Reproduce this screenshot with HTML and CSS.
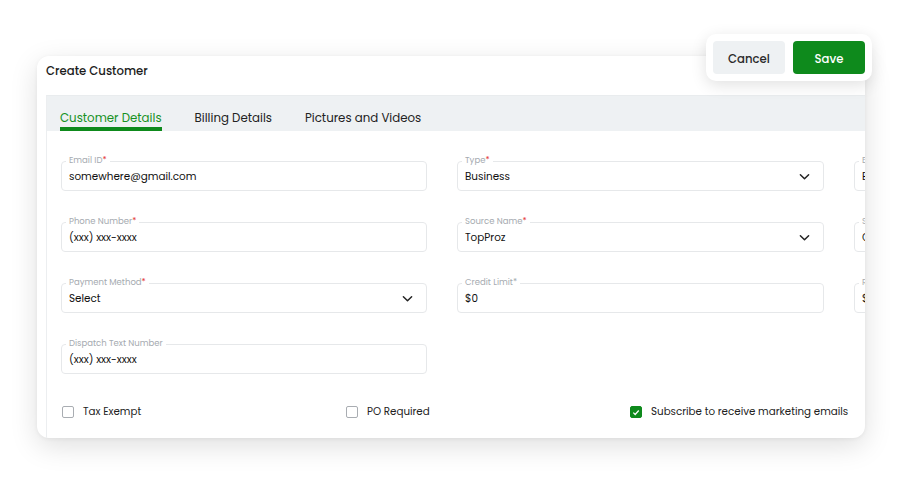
FILE: index.html
```html
<!DOCTYPE html>
<html>
<head>
<meta charset="utf-8">
<link rel="stylesheet" href="styles.css">
</head>
<body>
<div class="stage">
  <div class="card">
    <div class="card-title">Create Customer</div>
    <div class="panel">
      <div class="tabs">
        <div class="tab active">Customer Details</div>
        <div class="tab">Billing Details</div>
        <div class="tab">Pictures and Videos</div>
      </div>
      <div class="form">
        <div class="grid">
          <div class="field"><span class="label">Email ID<i>*</i></span><span class="value">somewhere@gmail.com</span></div>
          <div class="field"><span class="label">Type<i>*</i></span><span class="value">Business</span><svg class="chev" viewBox="0 0 12 8"><path d="M1.5 1.5 L6 6 L10.5 1.5"/></svg></div>
          <div class="field"><span class="label">Email<i>*</i></span><span class="value">B</span></div>

          <div class="field"><span class="label">Phone Number<i>*</i></span><span class="value">(xxx) xxx-xxxx</span></div>
          <div class="field"><span class="label">Source Name<i>*</i></span><span class="value">TopProz</span><svg class="chev" viewBox="0 0 12 8"><path d="M1.5 1.5 L6 6 L10.5 1.5"/></svg></div>
          <div class="field"><span class="label">Source<i>*</i></span><span class="value">C</span></div>

          <div class="field"><span class="label">Payment Method<i>*</i></span><span class="value">Select</span><svg class="chev" viewBox="0 0 12 8"><path d="M1.5 1.5 L6 6 L10.5 1.5"/></svg></div>
          <div class="field"><span class="label">Credit Limit<i class="grey">*</i></span><span class="value">$0</span></div>
          <div class="field"><span class="label">Rate<i>*</i></span><span class="value">$</span></div>

          <div class="field"><span class="label">Dispatch Text Number</span><span class="value">(xxx) xxx-xxxx</span></div>
        </div>
        <div class="checks">
          <label class="check"><span class="box"></span>Tax Exempt</label>
          <label class="check"><span class="box"></span>PO Required</label>
          <label class="check"><span class="box on"><svg viewBox="0 0 12 12"><path d="M2.8 6.2 L5 8.4 L9.3 3.6"/></svg></span>Subscribe to receive marketing emails</label>
        </div>
      </div>
    </div>
  </div>
  <div class="actions">
    <button class="btn cancel">Cancel</button>
    <button class="btn save">Save</button>
  </div>
</div>
</body>
</html>
```

FILE: styles.css
```css
* { box-sizing: border-box; }
html, body { margin: 0; padding: 0; background: #fff; }
body { font-family: "Poppins", "Open Sans", "Noto Sans", sans-serif; color: #1f2328; }

.stage {
  position: relative;
  width: 909px;
  height: 479px;
  overflow: hidden;
  padding: 56px 0 0 37px;
}

.card {
  width: 828px;
  height: 382px;
  background: #fff;
  border-radius: 12px;
  box-shadow: 0 8px 28px rgba(0,0,0,0.13), 0 1px 4px rgba(0,0,0,0.05);
  overflow: hidden;
  padding-left: 9px;
}

.card-title {
  height: 39px;
  padding-top: 8px;
  font-size: 11.7px;
  line-height: 14px;
  font-weight: 500;
  color: #1c1c1c;
}

.panel {
  width: 1300px;
  height: 343px;
  border-left: 1px solid #eceef0;
  border-top: 1px solid #e9ecee;
}

.tabs {
  height: 35px;
  background: #eef1f3;
  display: flex;
  align-items: flex-end;
  padding-left: 13px;
  gap: 33px;
}

.tab {
  font-size: 11.8px;
  color: #222;
  padding-bottom: 2px;
  border-bottom: 4px solid transparent;
  line-height: 14px;
}
.tab.active {
  color: #17911f;
  border-bottom-color: #0e8a1c;
}

.form {
  padding: 30px 0 0 14px;
}

.grid {
  display: grid;
  grid-template-columns: 366px 367px 366px;
  column-gap: 30px;
  row-gap: 31px;
}

.field {
  position: relative;
  height: 30px;
  border: 1px solid #e6e8ea;
  border-radius: 4px;
  display: flex;
  align-items: center;
  padding: 1px 8px 0 7px;
}

.label {
  position: absolute;
  top: -7px;
  left: 4px;
  padding: 0 3px;
  background: #fff;
  font-size: 8.5px;
  line-height: 11px;
  color: #a5aab0;
}
.label i { font-style: normal; color: #e53935; }
.label i.grey { color: #a5aab0; }

.value {
  font-size: 10.4px;
  color: #111;
}

.chev {
  position: absolute;
  right: 13px;
  top: 11px;
  width: 11px;
  height: 8px;
  fill: none;
  stroke: #222;
  stroke-width: 1.6;
  stroke-linecap: round;
  stroke-linejoin: round;
}

.checks {
  display: grid;
  grid-template-columns: 284px 284px 300px;
  margin-top: 30px;
  padding-left: 1px;
}

.check {
  display: flex;
  align-items: center;
  gap: 9px;
  font-size: 10.3px;
  color: #222;
}

.box {
  width: 12px;
  height: 12px;
  border: 1px solid #a9adb2;
  border-radius: 2px;
  display: inline-flex;
  align-items: center;
  justify-content: center;
}
.box.on {
  background: #0e8a1c;
  border-color: #0e8a1c;
}
.box svg {
  width: 11px;
  height: 11px;
  fill: none;
  stroke: #fff;
  stroke-width: 1.5;
}

.actions {
  position: absolute;
  left: 706px;
  top: 34px;
  width: 166px;
  height: 47px;
  background: #fff;
  border-radius: 10px;
  box-shadow: 0 4px 16px rgba(0,0,0,0.12);
  display: flex;
  gap: 8px;
  padding: 7px;
}

.btn {
  width: 72px;
  height: 33px;
  border: none;
  border-radius: 4px;
  font-family: inherit;
  font-size: 11.7px;
  font-weight: 500;
  line-height: 14px;
  padding: 2px 0 0 0;
}
.cancel { background: #eef1f3; color: #2a2a2a; }
.save { background: #0e8a1c; color: #fff; }
```
